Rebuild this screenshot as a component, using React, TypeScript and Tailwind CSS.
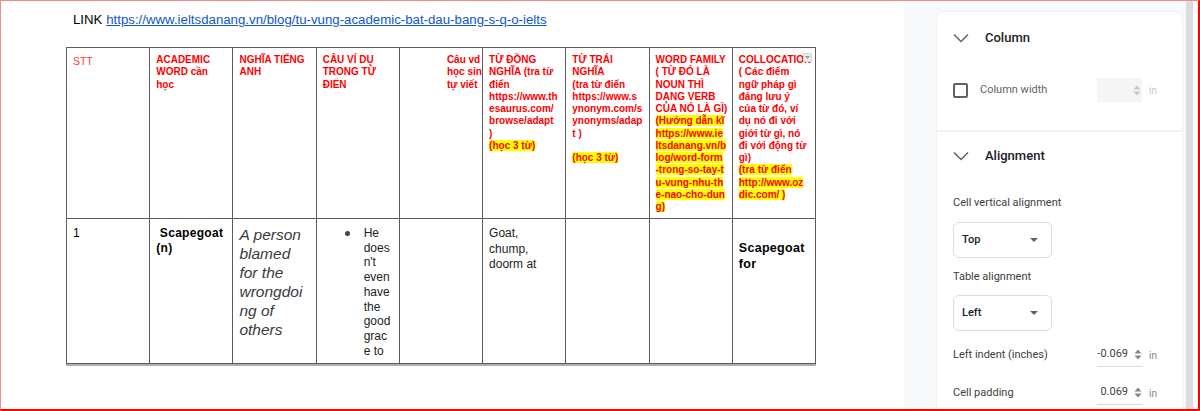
import React from "react";

type Line = { t: string; hl?: boolean };

function Chevron() {
  return (
    <svg width="16" height="16" viewBox="0 0 16 16" className="shrink-0">
      <path d="M1 4.5 L8 11.5 L15 4.5" fill="none" stroke="#5f6368" strokeWidth="1.5" />
    </svg>
  );
}

function Spinner({ light }: { light?: boolean }) {
  const c = light ? "#c4c7c5" : "#80868b";
  return (
    <svg width="8" height="11" viewBox="0 0 8 11" className="shrink-0">
      <path d="M0.5 4.5 L4 0.5 L7.5 4.5 Z" fill={c} />
      <path d="M0.5 6.5 L4 10.5 L7.5 6.5 Z" fill={c} />
    </svg>
  );
}

function Caret() {
  return (
    <svg width="8" height="4" viewBox="0 0 8 4">
      <path d="M0 0 L8 0 L4 4 Z" fill="#5f6368" />
    </svg>
  );
}

function HeadLines({ lines }: { lines: Line[] }) {
  return (
    <div className="whitespace-nowrap">
      {lines.map((l, i) => (
        <div key={i} className="h-[12.25px] leading-[12.25px]">
          {l.hl ? <span className="bg-[#ffff00]">{l.t}</span> : l.t || "\u00a0"}
        </div>
      ))}
    </div>
  );
}

function Select({ value }: { value: string }) {
  return (
    <div className="w-[99px] h-[36px] border border-[#dadce0] rounded-[6px] flex items-center justify-between pl-[8px] pr-[13px] text-[11px] text-[#202124] font-medium">
      <span>{value}</span>
      <Caret />
    </div>
  );
}

function NumberRow({ label, value }: { label: string; value: string }) {
  return (
    <div className="flex items-center h-[24px] pr-[25px]">
      <span className="text-[11px] text-[#3c4043]">{label}</span>
      <div className="ml-auto w-[45px] h-[24px] border-b border-[#dadce0] flex items-center justify-end gap-[6px] text-[11px] text-[#3c4043]">
        <span>{value}</span>
        <Spinner />
      </div>
      <span className="ml-[7px] text-[10px] text-[#80868b]">in</span>
    </div>
  );
}

export default function App() {
  const stt: Line[] = [{ t: "STT" }];
  const col2: Line[] = [{ t: "ACADEMIC" }, { t: "WORD cần" }, { t: "học" }];
  const col3: Line[] = [{ t: "NGHĨA  TIẾNG" }, { t: "ANH" }];
  const col4: Line[] = [{ t: "CÂU VÍ DỤ" }, { t: "TRONG TỪ" }, { t: "ĐIỂN" }];
  const col5: Line[] = [{ t: "Câu vd" }, { t: "học sin" }, { t: "tự viết" }];
  const col6: Line[] = [
    { t: "TỪ ĐỒNG" },
    { t: "NGHĨA (tra từ" },
    { t: "điển" },
    { t: "https://www.th" },
    { t: "esaurus.com/" },
    { t: "browse/adapt" },
    { t: ")" },
    { t: "(học 3 từ)", hl: true },
  ];
  const col7: Line[] = [
    { t: "TỪ TRÁI" },
    { t: "NGHĨA" },
    { t: "(tra từ điển" },
    { t: "https://www.s" },
    { t: "ynonym.com/s" },
    { t: "ynonyms/adap" },
    { t: "t )" },
    { t: "" },
    { t: "(học 3 từ)", hl: true },
  ];
  const col8: Line[] = [
    { t: "WORD FAMILY" },
    { t: "( TỪ ĐÓ LÀ" },
    { t: "NOUN THÌ" },
    { t: "DẠNG VERB" },
    { t: "CỦA NÓ LÀ GÌ)" },
    { t: "(Hướng dẫn kĩ", hl: true },
    { t: "https://www.ie", hl: true },
    { t: "ltsdanang.vn/b", hl: true },
    { t: "log/word-form", hl: true },
    { t: "-trong-so-tay-t", hl: true },
    { t: "u-vung-nhu-th", hl: true },
    { t: "e-nao-cho-dun", hl: true },
    { t: "g)", hl: true },
  ];
  const col9: Line[] = [
    { t: "COLLOCATION" },
    { t: "( Các điểm" },
    { t: "ngữ pháp gì" },
    { t: "đáng lưu ý" },
    { t: "của từ đó, ví" },
    { t: "dụ nó đi với" },
    { t: "giới từ gì, nó" },
    { t: "đi với động từ" },
    { t: "gì)" },
    { t: "(tra từ điển", hl: true },
    { t: "http://www.oz", hl: true },
    { t: "dic.com/ )", hl: true },
  ];

  const td = "border border-[#5c5c5c] align-top overflow-hidden";

  return (
    <div className="w-[1200px] h-[411px] flex overflow-hidden bg-white border-t border-l border-t-[#f28b82] border-l-[#f28b82] border-r-2 border-b-2 border-r-[#ff0000] border-b-[#ff0000]">
      {/* Document */}
      <div className="w-[903px] shrink-0 font-['Liberation_Sans',Arial,sans-serif]">
        <div className="pl-[72px] pt-[11px] h-[26px] text-[13.25px] leading-[16px] text-black">
          LINK{" "}
          <span className="text-[#1155cc] underline">
            https://www.ieltsdanang.vn/blog/tu-vung-academic-bat-dau-bang-s-q-o-ielts
          </span>
        </div>
        <table className="ml-[65px] mt-[20px] w-[750px] table-fixed border-collapse shadow-[0_2px_0_#b0b0b0]">
          <tbody>
            <tr className="h-[171px] text-[10px] font-bold text-[#ff0000]">
              <td className={`${td} pl-[6px] pt-[7px] font-normal text-[10.5px] text-[#ff3b3b]`}>
                <HeadLines lines={stt} />
              </td>
              <td className={`${td} pl-[6px] pt-[6px]`}>
                <HeadLines lines={col2} />
              </td>
              <td className={`${td} pl-[6px] pt-[6px]`}>
                <HeadLines lines={col3} />
              </td>
              <td className={`${td} pl-[6px] pt-[6px]`}>
                <HeadLines lines={col4} />
              </td>
              <td className={`${td} pl-[47px] pt-[6px]`}>
                <HeadLines lines={col5} />
              </td>
              <td className={`${td} pl-[6px] pt-[6px]`}>
                <HeadLines lines={col6} />
              </td>
              <td className={`${td} pl-[6px] pt-[6px]`}>
                <HeadLines lines={col7} />
              </td>
              <td className={`${td} pl-[6px] pt-[6px]`}>
                <HeadLines lines={col8} />
              </td>
              <td className={`${td} pl-[6px] pt-[6px] relative`}>
                <HeadLines lines={col9} />
                <div className="absolute right-[3px] top-[5px] w-[9px] h-[9px] bg-[#ececec] border border-[#d4d4d4] flex items-center justify-center">
                  <svg width="5" height="3" viewBox="0 0 5 3">
                    <path d="M0 0 L5 0 L2.5 3 Z" fill="#9a9a9a" />
                  </svg>
                </div>
              </td>
            </tr>
            <tr className="h-[145px] text-black">
              <td className={`${td} pl-[6px] pt-[7px] text-[12px] leading-[15px]`}>1</td>
              <td className={`${td} pl-[6px] pt-[7px] text-[12px] leading-[15px] font-bold tracking-[0.3px] whitespace-nowrap`}>
                <div>&nbsp;Scapegoat</div>
                <div>(n)</div>
              </td>
              <td className={`${td} pl-[6px] pt-[6px] text-[15.5px] leading-[19px] italic text-[#3a3a3a] whitespace-nowrap`}>
                {["A person", "blamed", "for the", "wrongdoi", "ng of", "others"].map((s) => (
                  <div key={s}>{s}</div>
                ))}
              </td>
              <td className={`${td} pt-[7px] text-[12px] leading-[14.7px] text-[#222]`}>
                <div className="flex">
                  <div className="w-[47px] shrink-0 flex justify-end pr-[14px] pt-[5px]">
                    <span className="w-[5px] h-[5px] rounded-full bg-[#444]" />
                  </div>
                  <div className="whitespace-nowrap">
                    {["He", "does", "n't", "even", "have", "the", "good", "grac", "e to"].map((s) => (
                      <div key={s}>{s}</div>
                    ))}
                  </div>
                </div>
              </td>
              <td className={td}></td>
              <td className={`${td} pl-[6px] pt-[7px] text-[12px] leading-[15.5px] text-[#222] whitespace-nowrap`}>
                <div>Goat,</div>
                <div>chump,</div>
                <div>doorm at</div>
              </td>
              <td className={td}></td>
              <td className={td}></td>
              <td className={`${td} pl-[6px] pt-[22px] text-[12.5px] leading-[15.5px] font-bold tracking-[0.3px] whitespace-nowrap`}>
                <div>Scapegoat</div>
                <div>for</div>
              </td>
            </tr>
          </tbody>
        </table>
      </div>

      {/* Side panel */}
      <div className="w-[282px] shrink-0 bg-[#f8f9fa] pl-[33px] pr-[4px] pt-[11px] font-[Roboto,sans-serif]">
        <div className="bg-white rounded-t-[8px] h-full shadow-[0_0_2px_rgba(60,64,67,0.12)]">
          <div className="px-[16px] pt-[18px] pb-[28px] border-b-2 border-[#f1f3f4]">
            <div className="flex items-center h-[16px] gap-[16px]">
              <Chevron />
              <span className="text-[13px] font-medium text-[#202124]">Column</span>
            </div>
            <div className="mt-[32px] flex items-center h-[24px] pr-[9px]">
              <span className="w-[15px] h-[15px] border-2 border-[#5f6368] rounded-[2px] shrink-0" />
              <span className="ml-[12px] text-[11px] text-[#5f6368]">Column width</span>
              <div className="ml-auto w-[45px] h-[24px] bg-[#f5f5f5] flex items-center justify-end pr-[1px]">
                <Spinner light />
              </div>
              <span className="ml-[7px] text-[10px] text-[#c4c7c5]">in</span>
            </div>
          </div>
          <div className="pl-[16px] pt-[16px]">
            <div className="flex items-center h-[16px] gap-[16px]">
              <Chevron />
              <span className="text-[13px] font-medium text-[#202124]">Alignment</span>
            </div>
            <div className="mt-[31px] h-[16px] leading-[16px] text-[11px] text-[#3c4043]">Cell vertical alignment</div>
            <div className="mt-[11px]">
              <Select value="Top" />
            </div>
            <div className="mt-[11px] h-[16px] leading-[16px] text-[11px] text-[#3c4043]">Table alignment</div>
            <div className="mt-[10px]">
              <Select value="Left" />
            </div>
            <div className="mt-[12px]">
              <NumberRow label="Left indent (inches)" value="-0.069" />
            </div>
            <div className="mt-[14px]">
              <NumberRow label="Cell padding" value="0.069" />
            </div>
          </div>
        </div>
      </div>
      <div className="w-[7px] shrink-0 bg-[#dadce0]" />
      <div className="flex-1 bg-white" />
    </div>
  );
}
